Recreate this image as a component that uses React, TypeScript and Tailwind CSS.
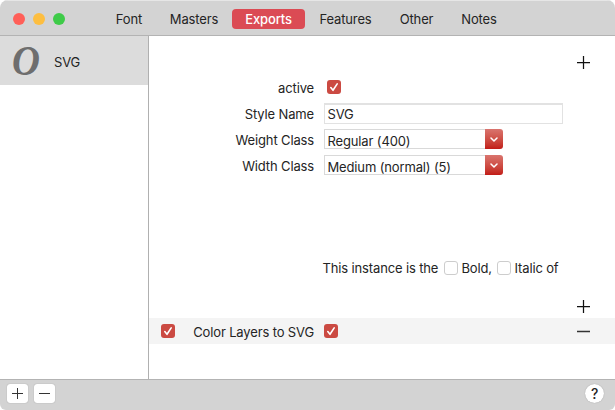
import type { ReactNode } from 'react';

const tabs = [
  { name: 'Font', box: 'w-[54px]' },
  { name: 'Masters', box: 'w-[76px]' },
  { name: 'Exports', box: 'w-[73px] rounded-[4px] bg-[#db4b54] text-white font-medium' },
  { name: 'Features', box: 'w-[81px]' },
  { name: 'Other', box: 'w-[61px]' },
  { name: 'Notes', box: 'w-[64px]' },
];

function Check({ on = false, className = '' }: { on?: boolean; className?: string }) {
  return on ? (
    <span className={`flex size-[14px] shrink-0 items-center justify-center rounded-[3px] bg-[#cb4a42] ${className}`}>
      <svg width="14" height="14" viewBox="0 0 14 14" fill="none" stroke="white" strokeWidth="1.6" strokeLinecap="round" strokeLinejoin="round">
        <path d="M3.8 7.6 6 10.3 10.2 3.9" />
      </svg>
    </span>
  ) : (
    <span className={`size-[14px] shrink-0 rounded-[3px] border border-[#cdcdcd] bg-white ${className}`} />
  );
}

function Plus({ size = 13, color = '#111' }: { size?: number; color?: string }) {
  return (
    <svg width={size} height={size} viewBox="0 0 13 13" stroke={color} strokeWidth="1.25">
      <path d="M0 6.5H13M6.5 0V13" />
    </svg>
  );
}

function Minus({ size = 13, color = '#333' }: { size?: number; color?: string }) {
  return (
    <svg width={size} height={size} viewBox="0 0 13 13" stroke={color} strokeWidth="1.4">
      <path d="M0 6.5H13" />
    </svg>
  );
}

function Row({ label, children }: { label: string; children: ReactNode }) {
  return (
    <div className="flex h-[26px] items-center">
      <span className="mr-[10px] w-[165px] pt-[2px] text-right">{label}</span>
      {children}
    </div>
  );
}

function Combo({ value }: { value: string }) {
  return (
    <div className="flex h-5 w-[179px]">
      <div className="flex-1 whitespace-nowrap border border-r-0 border-[#d9d9d9] pl-[2.5px] pt-[3px] leading-4">{value}</div>
      <div className="flex w-[18px] items-center justify-center rounded-r-[3px] bg-linear-to-b from-[#d9746e] to-[#c21a16]">
        <svg width="8" height="5" viewBox="0 0 8 5" fill="none" stroke="white" strokeWidth="1.5" strokeLinecap="round" strokeLinejoin="round">
          <path d="M1 1 4 4 7 1" />
        </svg>
      </div>
    </div>
  );
}

export default function App() {
  return (
    <div className="h-[410px] w-[615px] bg-white font-['Inter',sans-serif] text-[13px] leading-4 tracking-[-0.14px] text-[#242424]">
      <div className="flex h-full flex-col overflow-hidden rounded-t-[8px] rounded-b-[6px] bg-white">
        <header className="flex h-9 items-center border-t border-b border-t-[#e6e6e6] border-b-[#b3b3b3] bg-[#d3d3d3] pt-[2px]">
          <div className="ml-[13px] mr-[37px] flex gap-2">
            <span className="size-3 rounded-full bg-[#ff5f58]" />
            <span className="size-3 rounded-full bg-[#fdbe40]" />
            <span className="size-3 rounded-full bg-[#3ecb48]" />
          </div>
          <nav className="flex">
            {tabs.map((t) => (
              <span key={t.name} className={`flex h-5 items-center justify-center ${t.box}`}>
                {t.name}
              </span>
            ))}
          </nav>
        </header>

        <div className="flex flex-1">
          <aside className="w-[149px] border-r border-[#b0b0b0]">
            <div className="flex h-[49px] items-center bg-[#dcdcdc]">
              <span className="ml-[12px] mr-[11px] w-[31px] origin-left scale-x-90 font-['Liberation_Serif',serif] text-[43px] font-bold italic leading-[49px] text-[#6e6e6e]">
                O
              </span>
              <span className="pt-[3px]">SVG</span>
            </div>
          </aside>

          <main className="flex flex-1 flex-col">
            <div className="flex h-[38px] justify-end pr-[25px] pt-[20px]">
              <Plus />
            </div>
            <Row label="active">
              <Check on className="ml-[2.5px]" />
            </Row>
            <Row label="Style Name">
              <div className="h-[21px] w-[239px] border border-t-2 border-[#e2e2e2] pl-[2.5px] pt-px">SVG</div>
            </Row>
            <Row label="Weight Class">
              <Combo value="Regular (400)" />
            </Row>
            <Row label="Width Class">
              <Combo value="Medium (normal) (5)" />
            </Row>
            <div className="mt-[79px] flex h-[22px] items-center pl-[173.5px]">
              <span className="w-[121px] whitespace-nowrap">This instance is the</span>
              <Check />
              <span className="ml-[4px] w-[35px] whitespace-nowrap">Bold,</span>
              <Check />
              <span className="ml-[4px] whitespace-nowrap">Italic of</span>
            </div>
            <div className="flex h-[39px] justify-end pr-[25px] pt-[21px]">
              <Plus />
            </div>
            <div className="flex h-[26px] items-center bg-[#f4f4f4] pl-[12px] pr-[25px]">
              <Check on />
              <span className="w-[139px] whitespace-nowrap pt-[2px] text-right">Color Layers to SVG</span>
              <Check on className="ml-[9.5px]" />
              <span className="ml-auto">
                <Minus />
              </span>
            </div>
          </main>
        </div>

        <footer className="flex h-[31px] items-start gap-[6px] border-t border-[#b3b3b3] bg-[#d3d3d3] pl-[7px] pr-[11px] pt-[4px]">
          <span className="flex h-[19px] w-[21px] items-center justify-center rounded-[3px] bg-white shadow-[0_0_1px_#888]">
            <Plus size={11} color="#333" />
          </span>
          <span className="flex h-[19px] w-[21px] items-center justify-center rounded-[3px] bg-white shadow-[0_0_1px_#888]">
            <Minus size={11} />
          </span>
          <span className="ml-auto flex size-[19px] items-center justify-center rounded-full bg-white text-[14px] font-medium shadow-[0_0_1px_#888]">
            ?
          </span>
        </footer>
      </div>
    </div>
  );
}
